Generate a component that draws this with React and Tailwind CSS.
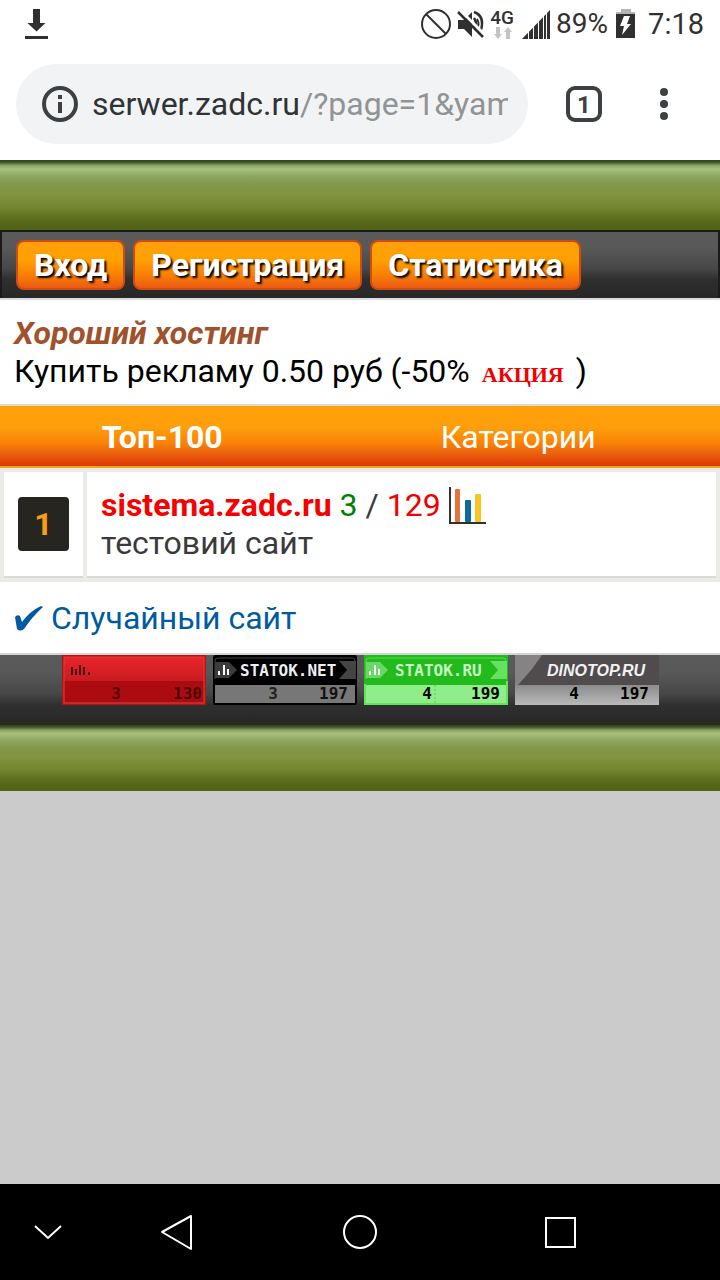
import React from 'react';

const navButtons = ['Вход', 'Регистрация', 'Статистика'];

const StatusBar = () => (
    <div className="h-12 pl-6 pr-4 flex items-center justify-between text-[#303030]">
        <svg className="w-6 h-8" viewBox="0 0 24 32" fill="currentColor">
            <path d="M9 1h7v14h5.500L12.500 23.500 3.500 15H9z" />
            <rect x="1" y="28" width="23" height="3" />
        </svg>

        <div className="flex items-center">
            <svg className="w-8 h-8" viewBox="0 0 32 32" fill="none" stroke="currentColor" strokeWidth="2">
                <circle cx="16" cy="16" r="14" />
                <path d="M6 6l20 20" />
            </svg>

            {/* Muted speaker with vibration arcs */}
            <svg className="ml-1 w-8 h-8" viewBox="0 0 32 32" fill="none" stroke="currentColor">
                <path d="M2 12h6l8-8v25l-8-8H2z" fill="currentColor" stroke="none" />
                <path d="M18 10q4 6 0 11M18 4q11 4 7 18" strokeWidth="2.500" />
                <path d="M21 11q3 5 0 9" strokeWidth="2" />
                <path d="M4 2l25 25" stroke="#fff" strokeWidth="3" />
                <path d="M2 4l25 25" strokeWidth="2.500" />
            </svg>

            <div className="w-7 flex flex-col items-center">
                <span className="text-[19px] leading-[18px] font-medium">4G</span>
                <svg className="w-5 h-3" viewBox="0 0 20 12" fill="#c4c4c4">
                    <path d="M4 0h4v7h2l-4 5-4-5h2zM14 12h4V5h2l-4-5-4 5h2z" />
                </svg>
            </div>

            <svg className="ml-1 w-8 h-8" viewBox="0 0 32 32">
                <path d="M2 31L30 2v29z" fill="currentColor" />
                <path d="M8.500 0v32M13.500 0v32M18.500 0v32M23.500 0v32M26.500 0v32" stroke="#fff" strokeWidth="1" />
            </svg>

            <span className="ml-1 text-[28px] leading-8">89%</span>

            <svg className="ml-2 w-5 h-8" viewBox="0 0 20 32">
                <rect x="5" y="1" width="10" height="4" fill="#b4b4b4" />
                <rect x="0" y="4" width="19" height="2" fill="#b4b4b4" />
                <rect x="0" y="6" width="19" height="24" fill="currentColor" />
                <path d="M8 8h6l-3 8h4L6 27l2-9H4z" fill="#fff" />
            </svg>

            <span className="ml-3 text-[29px] leading-8">7:18</span>
        </div>
    </div>
);

const AddressBar = () => (
    <div className="h-28 px-4 flex items-center text-[#3c4043]">
        <div className="flex-1 min-w-0 h-20 pl-6 pr-5 rounded-full bg-[#f1f3f4] flex items-center">
            <svg className="shrink-0 w-10 h-10" viewBox="0 0 40 40" fill="currentColor">
                <circle cx="20" cy="20" r="16" fill="none" stroke="currentColor" strokeWidth="4" />
                <rect x="18" y="11" width="4" height="4" />
                <rect x="18" y="18" width="4" height="11" />
            </svg>
            <div className="ml-3 flex-1 overflow-hidden whitespace-nowrap text-[32px] leading-10 text-[#303336]">
                serwer.zadc.ru<span className="text-[#919395]">/?page=1&amp;yam</span>
            </div>
        </div>
        <button className="ml-[38px] w-9 h-9 pt-0.5 rounded-[9px] border-4 border-current text-[24px] leading-none font-bold flex items-center justify-center" aria-label="Tabs">
            1
        </button>
        <button className="ml-[42px] mr-[20px] w-10 h-10 flex items-center justify-center" aria-label="Menu">
            <svg className="w-2 h-8" viewBox="0 0 8 32" fill="currentColor">
                <circle cx="4" cy="4" r="4" />
                <circle cx="4" cy="16" r="4" />
                <circle cx="4" cy="28" r="4" />
            </svg>
        </button>
    </div>
);

const GreenBar = ({ className }) => (
    <div className={`bg-[linear-gradient(#2f4218_0%,#3d5522_3%,#8ca465_8%,#a9c07d_13%,#8fa660_23%,#84984f_33%,#82943f_48%,#74852f_68%,#627320_80%,#566617_90%,#526114_100%)] ${className}`} />
);

const ChartIcon = () => (
    <svg className="w-[37px] h-[37px]" viewBox="0 0 37 37">
        <rect x="6" y="2" width="5" height="33" rx="1" fill="#e7723c" />
        <rect x="16" y="13" width="6" height="22" rx="1" fill="#0b699c" />
        <rect x="26" y="7" width="6" height="28" rx="1" fill="#fac421" />
        <path d="M1 0v36h36" fill="none" stroke="#303030" strokeWidth="2" />
    </svg>
);

const CheckIcon = () => (
    <svg className="w-[29px] h-[26px]" viewBox="0 0 29 26" fill="currentColor">
        <path d="M1 12q2-3 5-1l2 6Q16 6 27 1l2 1Q18 12 10 24q-4 3-7 0z" />
    </svg>
);

const Digits = ({ x, fill = '#000', children }) => (
    <text x={x} y="44" textAnchor="end" fill={fill} className="font-['DejaVu_Sans_Mono',monospace] text-[16px] font-bold">
        {children}
    </text>
);

const CounterRed = () => (
    <svg className="w-36 h-[50px]" viewBox="0 0 144 50">
        <defs>
            <linearGradient id="redTop" x1="0" y1="0" x2="0" y2="1">
                <stop offset="0" stopColor="#ea2429" />
                <stop offset="1" stopColor="#c81c20" />
            </linearGradient>
        </defs>
        <rect width="144" height="50" fill="#b51216" />
        <rect x="2" y="2" width="140" height="46" fill="#ac0c0f" />
        <rect x="2" y="2" width="140" height="24" fill="url(#redTop)" />
        <rect x="2" y="2" width="140" height="46" fill="none" stroke="#dc4043" />
        <path d="M10 12v8M14 14v6M18 10v10M22 12v8M27 17v3" stroke="#4a1010" strokeWidth="2" />
        <Digits x="59" fill="#5a0808">3</Digits>
        <Digits x="140" fill="#4a0808">130</Digits>
    </svg>
);

const CounterBlack = () => (
    <svg className="w-36 h-[50px]" viewBox="0 0 144 50">
        <rect width="144" height="50" rx="2" fill="#000" />
        <path d="M2 24V6q0-3 3-3h134q3 0 3 3" fill="none" stroke="#444" />
        <path d="M2 7h14l8 8-8 8H2z" fill="#3c3c3c" />
        <path d="M126 6h17v18h-17l8-9z" fill="#444" />
        <path d="M6 20v-4M11 20V10M15 20v-6" stroke="#fff" strokeWidth="2" />
        <text x="27" y="21" fill="#eee" className="font-['DejaVu_Sans_Mono',monospace] text-[16px] font-bold">STATOK.NET</text>
        <rect x="2" y="30" width="140" height="18" fill="#777" />
        <Digits x="65" fill="#222">3</Digits>
        <Digits x="135" fill="#111">197</Digits>
    </svg>
);

const CounterGreen = () => (
    <svg className="w-36 h-[50px]" viewBox="0 0 144 50">
        <rect width="144" height="50" fill="#22ba1c" />
        <path d="M2 24V6q0-3 3-3h134q3 0 3 3" fill="none" stroke="#55e34c" />
        <path d="M2 7h14l8 8-8 8H2z" fill="#67d964" />
        <path d="M126 6h17v18h-17l8-9z" fill="#67e162" />
        <path d="M6 20v-4M11 20V10M15 20v-6" stroke="#fff" strokeWidth="2" />
        <text x="31" y="21" fill="#c6fbc2" className="font-['DejaVu_Sans_Mono',monospace] text-[16px] font-bold">STATOK.RU</text>
        <rect x="0" y="30" width="144" height="20" fill="#8fee8a" />
        <path d="M1 29v21M143 26v24M0 49h144" stroke="#62e45a" strokeWidth="2" />
        <path d="M71 30v18" stroke="#5fc95a" strokeDasharray="2 2" />
        <Digits x="68">4</Digits>
        <Digits x="136">199</Digits>
    </svg>
);

const CounterGray = () => (
    <svg className="w-36 h-[50px]" viewBox="0 0 144 50">
        <defs>
            <linearGradient id="dinoBottom" x1="0" y1="0" x2="0" y2="1">
                <stop offset="0" stopColor="#8c8c8c" />
                <stop offset="1" stopColor="#b9b9b9" />
            </linearGradient>
        </defs>
        <rect width="144" height="50" fill="#858384" />
        <path d="M27 0h117v30H3L17 14z" fill="#504c4d" />
        <rect x="0" y="30" width="144" height="20" fill="url(#dinoBottom)" />
        <text x="32" y="21" fill="#f2f2f2" className="font-['Liberation_Sans',sans-serif] text-[16px] font-bold italic">DINOTOP.RU</text>
        <Digits x="64">4</Digits>
        <Digits x="134">197</Digits>
    </svg>
);

const SystemNav = () => (
    <nav className="h-24 bg-black text-white grid grid-cols-[96px_160px_208px_192px_1fr] items-center justify-items-center">
        <button aria-label="Hide">
            <svg className="w-8 h-8" viewBox="0 0 32 32" fill="none" stroke="currentColor" strokeWidth="2">
                <path d="M3 10l13 12 13-12" />
            </svg>
        </button>
        <button aria-label="Back">
            <svg className="w-10 h-10" viewBox="0 0 40 40" fill="none" stroke="currentColor" strokeWidth="2" strokeLinejoin="round">
                <path d="M35 4v33L6 20z" />
            </svg>
        </button>
        <button aria-label="Home">
            <svg className="w-10 h-10" viewBox="0 0 40 40" fill="none" stroke="currentColor" strokeWidth="2">
                <circle cx="20" cy="20" r="16" />
            </svg>
        </button>
        <button aria-label="Recent apps">
            <svg className="w-10 h-10" viewBox="0 0 40 40" fill="none" stroke="currentColor" strokeWidth="2">
                <rect x="6" y="6" width="29" height="29" />
            </svg>
        </button>
    </nav>
);

export default function App() {
    return (
        <div className="min-h-screen flex flex-col bg-[#cccbcb] font-[Roboto,sans-serif]">
            <header className="bg-white">
                <StatusBar />
                <AddressBar />
            </header>

            <main className="flex-1 text-[32px] leading-[38px]">
                <GreenBar className="h-[70px]" />

                <nav className="h-[68px] px-[14px] flex items-center gap-2 border-2 border-b-0 border-[#1b1b1b] bg-[linear-gradient(#5a5a5a_0%,#585858_25%,#474747_55%,#2f2f2f_72%,#272727_100%)]">
                    {navButtons.map((label) => (
                        <button
                            key={label}
                            className="h-[50px] px-4 rounded-lg border-2 border-[#d04c10] bg-[linear-gradient(#ff9f0c_0%,#ffa000_40%,#f97f04_72%,#ec5a14_100%)] font-bold leading-[46px] text-white [text-shadow:2px_2px_2px_#000]"
                        >
                            {label}
                        </button>
                    ))}
                </nav>

                {/* Ad block */}
                <section className="h-[106px] px-[14px] pt-[14px] bg-white border-t-2 border-[#dedede] text-black">
                    <a href="#hosting" className="block font-bold italic text-[#a0522d]">Хороший хостинг</a>
                    <a href="#ads" className="block">
                        Купить рекламу 0.50 руб (-50%
                        <span className="inline-block w-[106px] text-center font-['Liberation_Serif',serif] text-[22px] leading-8 font-bold text-[#f00000]">АКЦИЯ</span>
                        )
                    </a>
                </section>

                <nav className="h-16 pt-0.5 px-1 grid grid-cols-[80fr_100fr] items-center text-center text-white border-t-2 border-t-[#dadada] border-b-2 border-b-[#ffa217] bg-[linear-gradient(#ffa207_0%,#ff9f0c_35%,#f98305_62%,#e85a10_82%,#dc3800_100%)]">
                    <a href="#top" className="font-bold">Топ-100</a>
                    <a href="#categories">Категории</a>
                </nav>

                <section className="h-[114px] p-1 bg-[#ebeae7] flex gap-1 text-[#3a3a3c]">
                    <div className="w-[79px] bg-white border-b-2 border-[#d9d8d8] flex items-center justify-center">
                        <span className="w-[51px] h-[54px] rounded bg-[#262520] flex items-center justify-center font-bold text-[#f99d12]">1</span>
                    </div>
                    <div className="flex-1 px-[14px] flex flex-col justify-center bg-white border-b-2 border-[#d9d8d8]">
                        <div className="flex items-center gap-2">
                            <a href="#site" className="font-bold text-[#f80000]">sistema.zadc.ru</a>
                            <span className="text-[#008000]">3</span>
                            <span>/</span>
                            <span className="text-[#f00000]">129</span>
                            <a href="#stats" aria-label="Stats"><ChartIcon /></a>
                        </div>
                        <p>тестовий сайт</p>
                    </div>
                </section>

                <section className="h-[73px] px-[14px] flex items-center bg-white border-b-2 border-[#d5d5d5] text-[#005b9f]">
                    <a href="#random" className="flex items-center gap-2">
                        <CheckIcon />
                        Случайный сайт
                    </a>
                </section>

                <footer className="h-[70px] flex items-start justify-center gap-[7px] bg-[linear-gradient(#5a5a5a_0%,#585858_25%,#474747_55%,#2f2f2f_72%,#272727_100%)]">
                    <a href="#counter"><CounterRed /></a>
                    <a href="#statok-net"><CounterBlack /></a>
                    <a href="#statok-ru"><CounterGreen /></a>
                    <a href="#dinotop"><CounterGray /></a>
                </footer>
                <GreenBar className="h-[66px]" />
            </main>

            <SystemNav />
        </div>
    );
}
